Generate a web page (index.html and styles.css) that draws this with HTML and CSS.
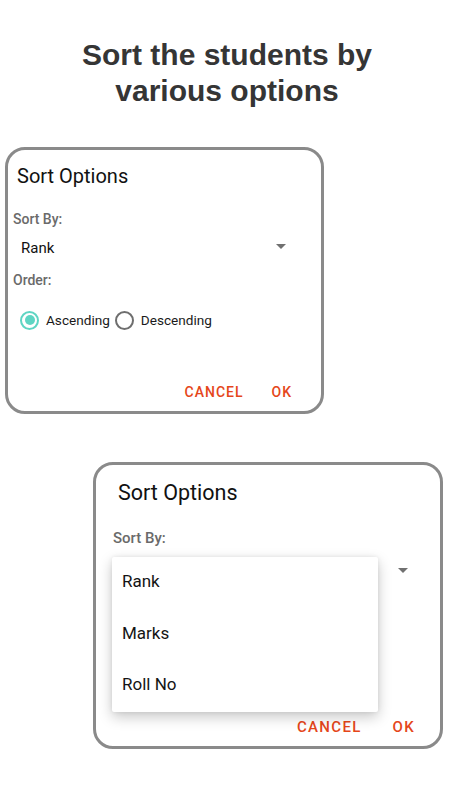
FILE: index.html
```html
<!DOCTYPE html>
<html lang="en">
<head>
<meta charset="utf-8">
<title>Sort Options</title>
<link rel="stylesheet" href="styles.css">
</head>
<body>
<div class="page">
  <h1 class="headline">Sort the students by<br>various options</h1>

  <div class="dialog dialog-a">
    <div class="dialog-title">Sort Options</div>
    <div class="field-label label-sort">Sort By:</div>
    <div class="spinner">
      <span class="spinner-value">Rank</span>
      <span class="spinner-arrow"></span>
    </div>
    <div class="field-label label-order">Order:</div>
    <div class="radio-row">
      <span class="radio radio-checked"></span>
      <span class="radio-text">Ascending</span>
      <span class="radio"></span>
      <span class="radio-text">Descending</span>
    </div>
    <div class="actions">
      <span class="btn">CANCEL</span>
      <span class="btn">OK</span>
    </div>
  </div>

  <div class="dialog dialog-b">
    <div class="dialog-title">Sort Options</div>
    <div class="field-label label-sort">Sort By:</div>
    <div class="spinner">
      <span class="spinner-arrow"></span>
    </div>
    <div class="actions">
      <span class="btn">CANCEL</span>
      <span class="btn">OK</span>
    </div>
    <div class="popup">
      <div class="popup-item">Rank</div>
      <div class="popup-item">Marks</div>
      <div class="popup-item">Roll No</div>
    </div>
  </div>
</div>
</body>
</html>
```

FILE: styles.css
```css
* { box-sizing: border-box; }

body {
  margin: 0;
  background: #ffffff;
  font-family: Roboto, "Noto Sans", sans-serif;
  color: #1a1a1a;
}

.page {
  width: 450px;
  height: 800px;
  padding-top: 37px;
  overflow: hidden;
}

.headline {
  margin: 0;
  font-family: "Liberation Sans", Arial, sans-serif;
  font-weight: bold;
  font-size: 30px;
  line-height: 36px;
  color: #353535;
  text-align: center;
  padding-left: 4px;
}

/* ---------- dialog ---------- */
.dialog {
  position: relative;
  border: 3px solid #8a8a8a;
  border-radius: 20px;
  background: #fff;
  display: flex;
  flex-direction: column;
}

.dialog-a {
  width: 319px;
  height: 267px;
  margin: 38px 0 0 5px;
  padding: 14px 0 0 5px;
}

.dialog-b {
  width: 350px;
  height: 287px;
  margin: 48px 0 0 93px;
  padding: 15px 0 0 17px;
}

.dialog-title {
  font-size: 20px;
  line-height: 24px;
  margin-left: 4px;
  color: #111;
}
.dialog-b .dialog-title {
  font-size: 21.5px;
  line-height: 26px;
  margin-left: 5px;
}

.field-label {
  font-size: 14px;
  line-height: 20px;
  font-weight: 500;
  color: #6a6a6a;
}
.dialog-a .label-sort { margin-top: 21px; }
.dialog-a .label-order { margin-top: 7px; }
.dialog-b .label-sort { margin-top: 22px; font-size: 15px; }

.spinner {
  display: flex;
  align-items: center;
  justify-content: space-between;
  height: 30px;
  width: 273px;
  margin-top: 4px;
}
.dialog-b .spinner {
  width: 295px;
  height: 44px;
  margin-top: 0;
  justify-content: flex-end;
}

.spinner-value {
  font-size: 15px;
  margin-left: 8px;
  color: #111;
}

.spinner-arrow {
  width: 0;
  height: 0;
  border-left: 5px solid transparent;
  border-right: 5px solid transparent;
  border-top: 5px solid #707070;
  margin-bottom: 4px;
}
.dialog-b .spinner-arrow { margin-bottom: 0; }

.radio-row {
  display: flex;
  align-items: center;
  height: 30px;
  margin-top: 15px;
  margin-left: 7px;
}

.radio {
  width: 19px;
  height: 19px;
  border-radius: 50%;
  border: 2px solid #6e6e6e;
  position: relative;
  flex: none;
}
.radio-checked {
  border-color: #5ed5c3;
}
.radio-checked::after {
  content: "";
  position: absolute;
  left: 2.5px;
  top: 2.5px;
  width: 10px;
  height: 10px;
  border-radius: 50%;
  background: #5ed5c3;
}

.radio-text {
  font-size: 13.6px;
  color: #1a1a1a;
  margin: 0 5px 0 7px;
}

.actions {
  display: flex;
  justify-content: flex-end;
  gap: 28px;
  padding-right: 29px;
  margin-top: 47px;
}
.dialog-b .actions {
  margin-top: 125px;
  padding-right: 25px;
  gap: 31px;
}

.btn {
  font-size: 14px;
  line-height: 20px;
  font-weight: 500;
  letter-spacing: 1px;
  color: #e5461a;
}
.dialog-b .btn {
  font-size: 15px;
  letter-spacing: 1.3px;
}

/* ---------- popup menu ---------- */
.popup {
  position: absolute;
  left: 16px;
  top: 92px;
  width: 266px;
  height: 155px;
  background: #fff;
  border-radius: 2px;
  box-shadow: 0 5px 14px rgba(0, 0, 0, 0.22), 0 0 4px rgba(0, 0, 0, 0.08);
  display: flex;
  flex-direction: column;
}

.popup-item {
  flex: none;
  height: 51.5px;
  display: flex;
  align-items: center;
  padding: 0 0 3px 10px;
  font-size: 17px;
  color: #141414;
}
```
